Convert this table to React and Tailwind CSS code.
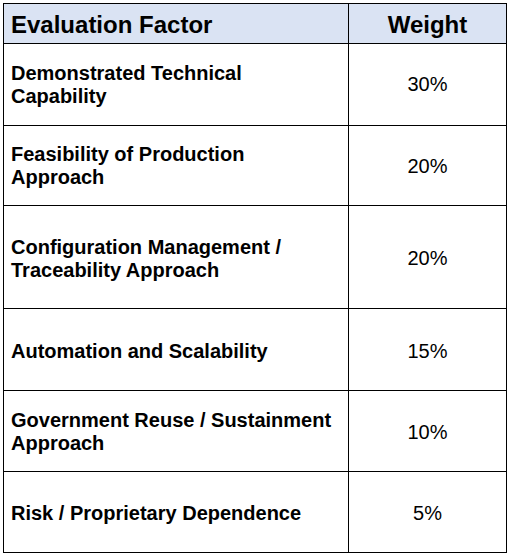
import React from 'react';

const rows = [
  { factor: ['Demonstrated Technical', 'Capability'], weight: '30%', h: 'h-[82px]', pt: 'pt-0' },
  { factor: ['Feasibility of Production', 'Approach'], weight: '20%', h: 'h-[80px]', pt: 'pt-[1px]' },
  { factor: ['Configuration Management /', 'Traceability Approach'], weight: '20%', h: 'h-[103px]', pt: 'pt-[3px]' },
  { factor: ['Automation and Scalability'], weight: '15%', h: 'h-[82px]', pt: 'pt-[3px]' },
  { factor: ['Government Reuse / Sustainment', 'Approach'], weight: '10%', h: 'h-[81px]', pt: 'pt-[2px]' },
  { factor: ['Risk / Proprietary Dependence'], weight: '5%', h: 'h-[81px]', pt: 'pt-[2px]' },
];

const App = () => {
  return (
    <div className="min-h-screen bg-white pl-[3px] pt-[3px] font-['Liberation_Sans',Arial,sans-serif] text-black">
      <div className="w-[504px] border border-black">
        {/* Header */}
        <div className="grid grid-cols-[345px_1fr] h-[39px] bg-[#dae3f3]">
          <div className="flex items-center pl-[7px] pt-[2px] border-r border-black text-[24px] font-bold leading-none">
            Evaluation Factor
          </div>
          <div className="flex items-center justify-center pt-[2px] text-[24px] font-bold leading-none">
            Weight
          </div>
        </div>

        {/* Body rows */}
        {rows.map((r, i) => (
          <div key={i} className={`grid grid-cols-[345px_1fr] border-t border-black ${r.h}`}>
            <div className={`flex flex-col justify-center pl-[7px] border-r border-black text-[20px] font-bold leading-[23px] ${r.pt}`}>
              {r.factor.map((line, j) => (
                <span key={j}>{line}</span>
              ))}
            </div>
            <div className={`flex items-center justify-center text-[20px] leading-[23px] ${r.pt}`}>
              {r.weight}
            </div>
          </div>
        ))}
      </div>
    </div>
  );
};

export default App;
